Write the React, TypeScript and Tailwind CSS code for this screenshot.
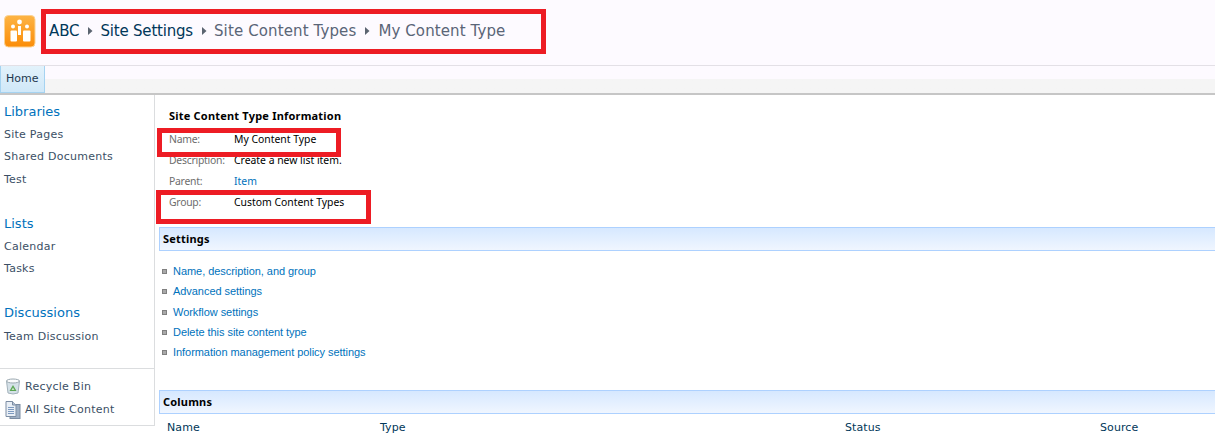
import React from "react";

const verdana = "font-['DejaVu_Sans',sans-serif]";
const tahoma = "font-['Noto_Sans',sans-serif]";
const arial = "font-['Liberation_Sans',sans-serif]";

function Arrow() {
  return (
    <svg width="5" height="8" viewBox="0 0 5 8" className="ml-[9px] mr-[7px] shrink-0">
      <path d="M0 0 L4.5 4 L0 8 Z" fill="#5b6470" />
    </svg>
  );
}

function Logo() {
  return (
    <svg width="32" height="33" viewBox="0 0 32 33" className="shrink-0">
      <defs>
        <linearGradient id="logoBg" x1="0" y1="0" x2="0" y2="1">
          <stop offset="0" stopColor="#fdb445" />
          <stop offset="1" stopColor="#fb8c08" />
        </linearGradient>
      </defs>
      <rect x="0.5" y="0.5" width="30.5" height="31.5" rx="4" fill="url(#logoBg)" stroke="#fbd294" />
      <circle cx="15.5" cy="7" r="2.4" fill="#fff" />
      <circle cx="9" cy="11.5" r="2" fill="#fff" />
      <circle cx="23" cy="11.5" r="2" fill="#fff" />
      <rect x="6.5" y="15.5" width="6.5" height="11" rx="1" fill="#fff" />
      <rect x="14" y="11" width="3" height="9" fill="#fff" />
      <rect x="19" y="15.5" width="7.5" height="11" rx="1" fill="#fff" />
    </svg>
  );
}

function BinIcon() {
  return (
    <svg width="16" height="17" viewBox="0 0 16 17" className="shrink-0">
      <path d="M1.5 3 L14.5 3 L13 15 Q8 17 3 15 Z" fill="#d5e1e8" stroke="#a3b2bb" />
      <ellipse cx="8" cy="3" rx="6.5" ry="2" fill="#fbfcfd" stroke="#9aa8b0" />
      <path d="M8 7 L11.5 13 L4.5 13 Z" fill="#5aa552" />
      <path d="M8 9.5 L9.5 12 L6.5 12 Z" fill="#c9e4c4" />
    </svg>
  );
}

function PagesIcon() {
  return (
    <svg width="16" height="18" viewBox="0 0 16 18" className="shrink-0">
      <rect x="5" y="3.5" width="10" height="14" fill="#9fb0c4" stroke="#7c8da3" />
      <path d="M1 0.5 H7.5 L11 4 V15.5 H1 Z" fill="#e9eff6" stroke="#7c8da3" />
      <path d="M7.5 0.5 V4 H11" fill="#b9c7d8" stroke="#7c8da3" />
      <path d="M3 6.5 H9 M3 8.5 H9 M3 10.5 H9 M3 12.5 H9" stroke="#7d9ac0" />
    </svg>
  );
}

function Bullet() {
  return <span className="w-[5px] h-[5px] bg-[#a8a8a8] border border-[#808080] mr-[6px] shrink-0" />;
}

function NavGroup({ title, items, className }: { title: string; items: [string, string][]; className: string }) {
  return (
    <div className={className}>
      <div className={`text-[13px] leading-[16px] text-[#0072bc] ${verdana}`}>{title}</div>
      {items.map(([label, cls]) => (
        <div key={label} className={`text-[11px] leading-[14px] tracking-[0.25px] text-[#3b4f65] ${cls}`}>
          {label}
        </div>
      ))}
    </div>
  );
}

function SectionBar({ title, className }: { title: string; className: string }) {
  return (
    <div
      className={`h-[24px] ml-[4px] flex items-center pt-[1px] pl-[3px] border-y border-l border-[#add1ff] bg-gradient-to-b from-[#d6e8ff] to-[#f0f6ff] text-[11px] tracking-[0.2px] font-bold text-black ${tahoma} ${className}`}
    >
      {title}
    </div>
  );
}

const settings = [
  ["Name, description, and group", "mt-[13px]"],
  ["Advanced settings", "mt-[6px]"],
  ["Workflow settings", "mt-[7px]"],
  ["Delete this site content type", "mt-[6px]"],
  ["Information management policy settings", "mt-[6px]"],
];

const info = [
  ["Name:", "My Content Type", "text-black", "mt-[9px]"],
  ["Description:", "Create a new list item.", "text-black", "mt-[7px]"],
  ["Parent:", "Item", "text-[#0072bc]", "mt-[7px]"],
  ["Group:", "Custom Content Types", "text-black", "mt-[7px]"],
];

export default function App() {
  return (
    <div className={`relative w-[1215px] h-[444px] overflow-hidden bg-white ${verdana}`}>
      {/* header */}
      <div className="h-[66px] flex items-start bg-[#fdfaff] border-b border-[#e3e0e6] pl-[4px] pt-[15px]">
        <Logo />
        <div className="ml-[13px] mt-[6px] flex items-center text-[15px] leading-[20px] tracking-[-0.1px]">
          <span className="text-[#003759]">ABC</span>
          <Arrow />
          <span className="text-[#003759] tracking-[-0.2px]">Site Settings</span>
          <Arrow />
          <span className="text-[#5a6577] tracking-[0.12px]">Site Content Types</span>
          <Arrow />
          <span className="ml-[1px] text-[#5a6577] tracking-[0.1px]">My Content Type</span>
        </div>
      </div>

      {/* tab row */}
      <div className="h-[29px] flex bg-gradient-to-b from-[#fdfaff] from-50% to-[#f5f5f5] to-50% border-b-2 border-[#c6c6c6]">
        <div className="w-[45px] h-[27px] flex items-center pl-[5px] pt-[1px] bg-gradient-to-b from-[#e3f2fb] to-[#d0e8f8] border-x border-b border-[#a5d3f1] text-[11px] text-[#23384f]">
          Home
        </div>
      </div>

      <div className="flex">
        {/* left nav */}
        <div className="w-[155px] h-[331px] shrink-0 flex flex-col border-r border-b border-[#dbdddf] pl-[4px]">
          <NavGroup
            title="Libraries"
            className="pt-[9px]"
            items={[
              ["Site Pages", "mt-[8px]"],
              ["Shared Documents", "mt-[8px]"],
              ["Test", "mt-[9px]"],
            ]}
          />
          <NavGroup
            title="Lists"
            className="mt-[29px]"
            items={[
              ["Calendar", "mt-[8px]"],
              ["Tasks", "mt-[8px]"],
            ]}
          />
          <NavGroup
            title="Discussions"
            className="mt-[29px]"
            items={[["Team Discussion", "mt-[9px]"]]}
          />
          <div className="mt-[24px] -ml-[4px] border-t border-[#dbdddf] pl-[5px] pt-[9px] text-[11px] leading-[14px] tracking-[0.25px] text-[#3b4f65]">
            <div className="flex items-center gap-[4px] h-[17px]">
              <BinIcon />
              Recycle Bin
            </div>
            <div className="flex items-center gap-[4px] h-[17px] mt-[6px]">
              <PagesIcon />
              All Site Content
            </div>
          </div>
        </div>

        {/* main */}
        <div className={`flex-1 pt-[14px] ${tahoma}`}>
          <div className="ml-[14px] text-[11px] leading-[14px] tracking-[0.2px] font-bold text-black">Site Content Type Information</div>
          <div className="ml-[14px] text-[10.4px] leading-[14px]">
            {info.map(([label, value, color, gap]) => (
              <div key={label} className={`flex ${gap}`}>
                <span className="w-[65px] tracking-[-0.25px] text-[#6d6d6d]">{label}</span>
                <span className={color}>{value}</span>
              </div>
            ))}
          </div>
          <SectionBar title="Settings" className="mt-[18px]" />
          <div className={`ml-[7px] text-[11px] leading-[14px] tracking-[-0.05px] text-[#0072bc] ${arial}`}>
            {settings.map(([label, gap]) => (
              <div key={label} className={`flex items-center ${gap}`}>
                <Bullet />
                {label}
              </div>
            ))}
          </div>
          <SectionBar title="Columns" className="mt-[31px]" />
          <div className={`relative h-[14px] mt-[7px] text-[11px] leading-[14px] tracking-[0.1px] text-[#003759] ${verdana}`}>
            <span className="inline-block w-[213px] ml-[12px]">Name</span>
            <span className="inline-block w-[465px]">Type</span>
            <span className="inline-block w-[255px]">Status</span>
            <span>Source</span>
          </div>
        </div>
      </div>

      {/* red annotation boxes drawn over the screenshot */}
      <div className="absolute left-[41px] top-[9px] w-[505px] h-[45px] border-[5px] border-[#ed1c24]" />
      <div className="absolute left-[157px] top-[128px] w-[184px] h-[29px] border-[5px] border-[#ed1c24]" />
      <div className="absolute left-[156px] top-[190px] w-[215px] h-[34px] border-[5px] border-[#ed1c24]" />
    </div>
  );
}
